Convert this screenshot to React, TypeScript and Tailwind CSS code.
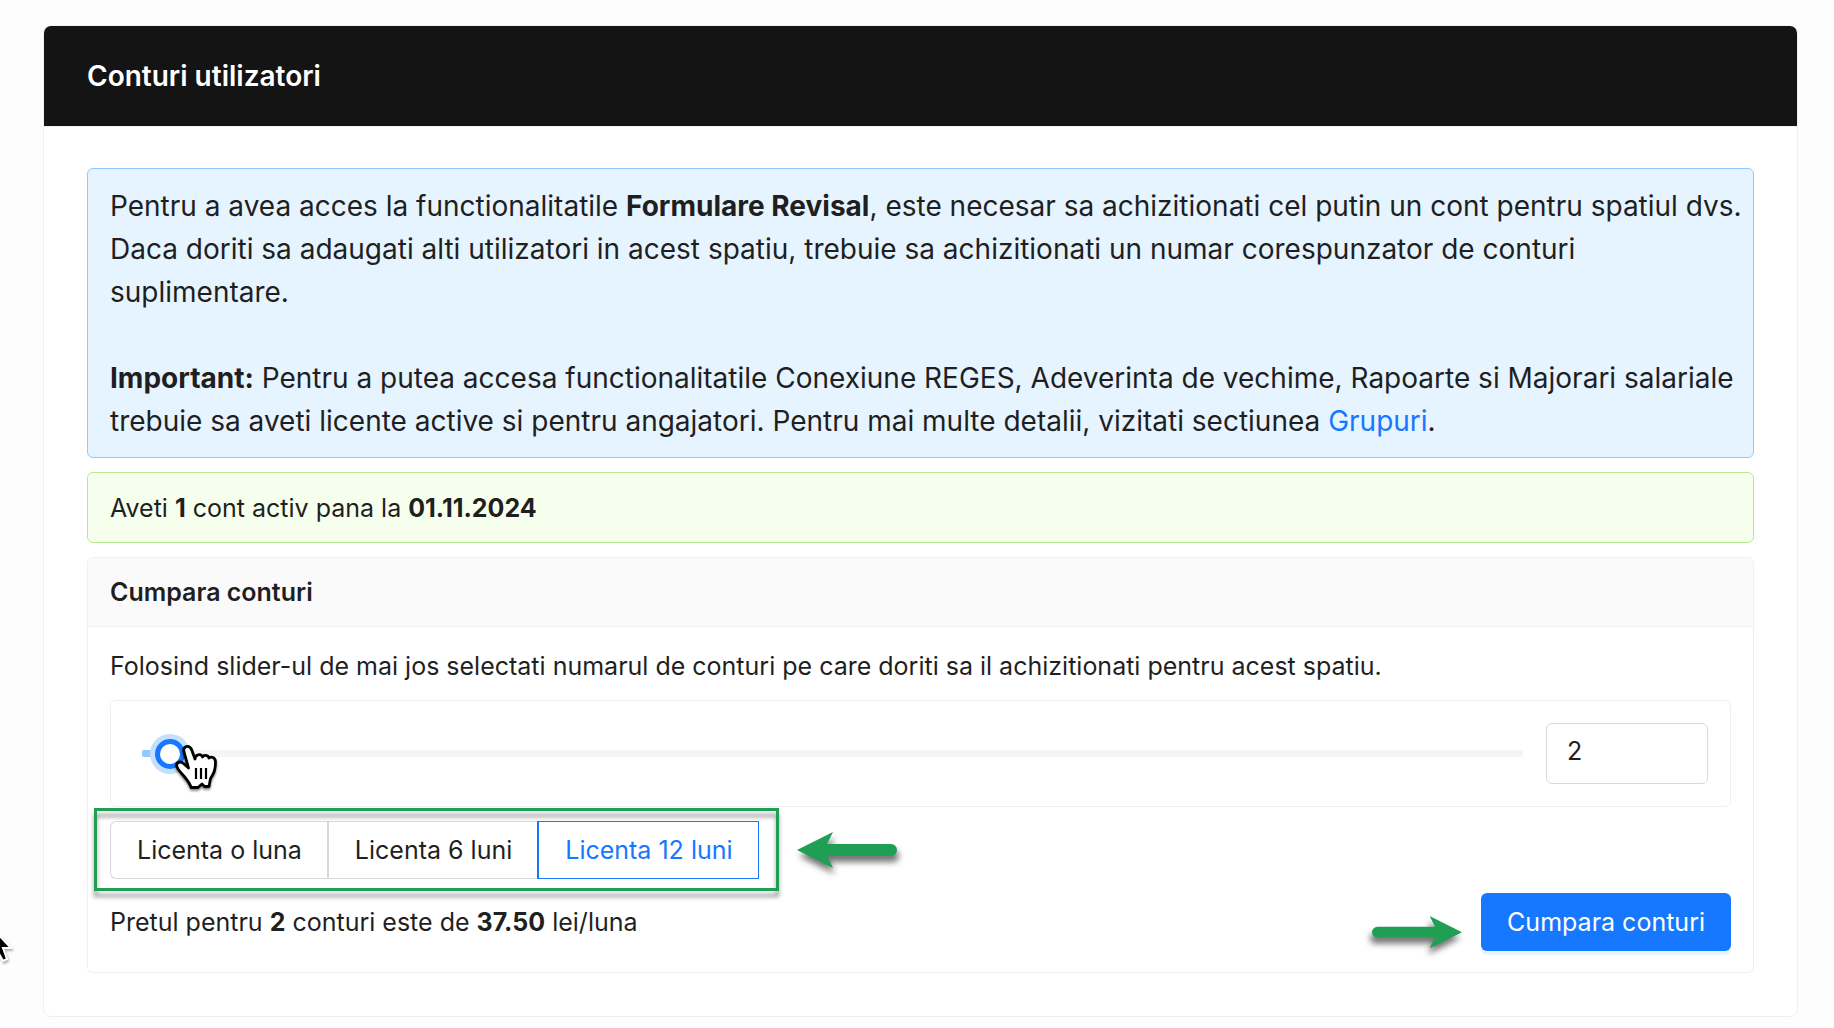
import { useState } from 'react';
import clsx from 'clsx';

interface License {
  id: string;
  label: string;
}

const licenses: License[] = [
  { id: '1', label: 'Licenta o luna' },
  { id: '6', label: 'Licenta 6 luni' },
  { id: '12', label: 'Licenta 12 luni' },
];

const ArrowMark = ({ className }: { className?: string }) => (
  <svg
    viewBox="0 0 100 36"
    aria-hidden="true"
    className={clsx('drop-shadow-[2px_6px_3px_rgba(0,0,0,0.55)]', className)}
  >
    <path d="M0 18 L36 0 L30 12 H94 A6 6 0 0 1 94 24 H30 L36 36 Z" fill="#1f9f54" />
  </svg>
);

const HandCursor = ({ className }: { className?: string }) => (
  <svg
    viewBox="0 0 42 46"
    aria-hidden="true"
    className={clsx('drop-shadow-[0_2px_1px_rgba(0,0,0,0.45)]', className)}
  >
    <path
      d="M13.500 24 L9 8 C7.500 2 14 0.500 16.500 5.500 L20 15 C20 10 26 9.500 27.500 13 C29 10.500 33 11 34 14 C36 12 40.500 13.500 40.500 18 C40.500 26 39 29 35.500 34.500 L34 42.500 H29.500 L27 40 L23 43.500 H16 C14.500 37 9 33 3 25 C-0.500 19.500 4 16 8.500 19.500 Z"
      fill="#fff"
      stroke="#000"
      strokeWidth="2.800"
      strokeLinejoin="round"
    />
    <path d="M21 24 V35 M26 24 V35 M31 24 V35" stroke="#000" strokeWidth="2.200" />
  </svg>
);

const App = () => {
  const [accounts, setAccounts] = useState(2);
  const [license, setLicense] = useState('12');

  const total = (accounts * 18.75).toFixed(2);

  return (
    <div className="relative min-h-screen overflow-hidden bg-[#fdfdfd] pt-[25px] pr-9 pb-3 pl-[43px] font-['Inter',sans-serif] text-[25px] leading-[37px] text-[#1f1f1f]">
      <main className="rounded-lg border border-[#f0f0f0] bg-white">
        <header className="rounded-t-[7px] bg-[#141414] px-[43px] py-8">
          <h1 className="text-[28px] leading-9 font-semibold text-white">Conturi utilizatori</h1>
        </header>

        <div className="flex flex-col gap-3.5 border-t border-[#f0f0f0] px-[43px] pt-[41px] pb-[43px]">
          {/* Info */}
          <section className="rounded-md border border-[#91caff] bg-[#e6f4ff] pt-4 pr-2.5 pb-3.5 pl-[22px] text-[28px] leading-[43px]">
            <p>
              Pentru a avea acces la functionalitatile <strong>Formulare Revisal</strong>, este necesar sa
              achizitionati cel putin un cont pentru spatiul dvs. Daca doriti sa adaugati alti utilizatori in
              acest spatiu, trebuie sa achizitionati un numar corespunzator de conturi suplimentare.
            </p>
            <p className="mt-[43px]">
              <strong>Important:</strong> Pentru a putea accesa functionalitatile Conexiune REGES, Adeverinta de
              vechime, Rapoarte si Majorari salariale trebuie sa aveti licente active si pentru angajatori.
              Pentru mai multe detalii, vizitati sectiunea{' '}
              <a href="#grupuri" className="text-[#1677ff]">Grupuri</a>.
            </p>
          </section>

          {/* Active accounts */}
          <section className="rounded-md border border-[#b7eb8f] bg-[#f6ffed] px-[22px] pt-[17px] pb-[15px]">
            Aveti <strong>1</strong> cont activ pana la <strong>01.11.2024</strong>
          </section>

          {/* Buy accounts */}
          <section className="rounded-md border border-[#f0f0f0]">
            <h2 className="rounded-t-md border-b border-[#f0f0f0] bg-[#fafafa] px-[22px] pt-4 pb-[15px] font-semibold">
              Cumpara conturi
            </h2>
            <div className="flex flex-col px-[22px] pt-[21px] pb-[21px]">
              <p>Folosind slider-ul de mai jos selectati numarul de conturi pe care doriti sa il achizitionati pentru acest spatiu.</p>

              <div className="relative mt-[15px] flex items-center gap-[23px] rounded-md border border-[#f0f0f0] py-[22px] pr-[22px] pl-[31px]">
                <div className="grid flex-1 items-center">
                  <div className="h-[7px] rounded-xs bg-[#f5f5f5] [grid-area:1/1]">
                    <div className="h-[7px] rounded-xs bg-[#91caff]" style={{ width: `${accounts}%` }} />
                  </div>
                  <input
                    type="range"
                    min={0}
                    max={100}
                    value={accounts}
                    aria-label="Numar de conturi"
                    onChange={(e) => setAccounts(Number(e.target.value))}
                    className="-mx-[15px] h-[30px] w-[calc(100%+30px)] cursor-pointer appearance-none bg-transparent [grid-area:1/1] focus:outline-none [&::-webkit-slider-thumb]:size-[30px] [&::-webkit-slider-thumb]:appearance-none [&::-webkit-slider-thumb]:rounded-full [&::-webkit-slider-thumb]:border-[5px] [&::-webkit-slider-thumb]:border-[#1677ff] [&::-webkit-slider-thumb]:bg-white [&::-webkit-slider-thumb]:shadow-[0_0_0_5px_#c5dfff]"
                  />
                </div>
                <input
                  type="text"
                  value={accounts}
                  aria-label="Conturi"
                  onChange={(e) => setAccounts(Number(e.target.value) || 0)}
                  className="w-[162px] rounded-md border border-[#d9d9d9] px-5 pt-[9px] pb-[13px]"
                />
                <HandCursor className="pointer-events-none absolute top-[43px] left-16 w-[42px]" />
              </div>

              <div className="relative mt-3.5 flex self-start">
                {licenses.map((item) => (
                  <label
                    key={item.id}
                    className={clsx(
                      'cursor-pointer border pt-2.5 pr-[25px] pb-[9px] pl-[26px] not-first:border-l-2 first:rounded-l-md last:rounded-r-md',
                      license === item.id
                        ? 'border-[#1677ff] text-[#1677ff]'
                        : 'border-[#d9d9d9] not-last:border-r-0'
                    )}
                  >
                    <input
                      type="radio"
                      name="license"
                      value={item.id}
                      checked={license === item.id}
                      onChange={() => setLicense(item.id)}
                      className="sr-only"
                    />
                    {item.label}
                  </label>
                ))}
                <div className="pointer-events-none absolute -top-[13px] -right-5 -bottom-3 -left-4 border-[3px] border-[#1f9f54] drop-shadow-[0_6px_2px_rgba(0,0,0,0.4)]" />
                <ArrowMark className="pointer-events-none absolute top-[11px] left-full ml-[38px] w-[100px]" />
              </div>

              <div className="mt-3.5 flex items-center justify-between">
                <p>
                  Pretul pentru <strong>{accounts}</strong> conturi este de <strong>{total}</strong> lei/luna
                </p>
                <div className="relative">
                  <button
                    type="button"
                    className="block rounded-md bg-[#1677ff] px-[26px] pt-[11px] pb-2.5 text-white shadow-[0_4px_0_rgba(5,145,255,0.1)]"
                  >
                    Cumpara conturi
                  </button>
                  <ArrowMark className="pointer-events-none absolute top-[23px] right-full mr-[19px] w-[90px] -scale-x-100" />
                </div>
              </div>
            </div>
          </section>
        </div>
      </main>

      {/* Pointer at the window edge */}
      <svg
        viewBox="0 0 16 30"
        aria-hidden="true"
        className="absolute top-[934px] left-0 w-4 drop-shadow-[1px_2px_1px_rgba(0,0,0,0.3)]"
      >
        <path d="M-6 -4 L11 14 L3 14 L7 25 L3 27 L-2 18" fill="#000" stroke="#fff" strokeWidth="2" />
      </svg>
    </div>
  );
};

export default App;
